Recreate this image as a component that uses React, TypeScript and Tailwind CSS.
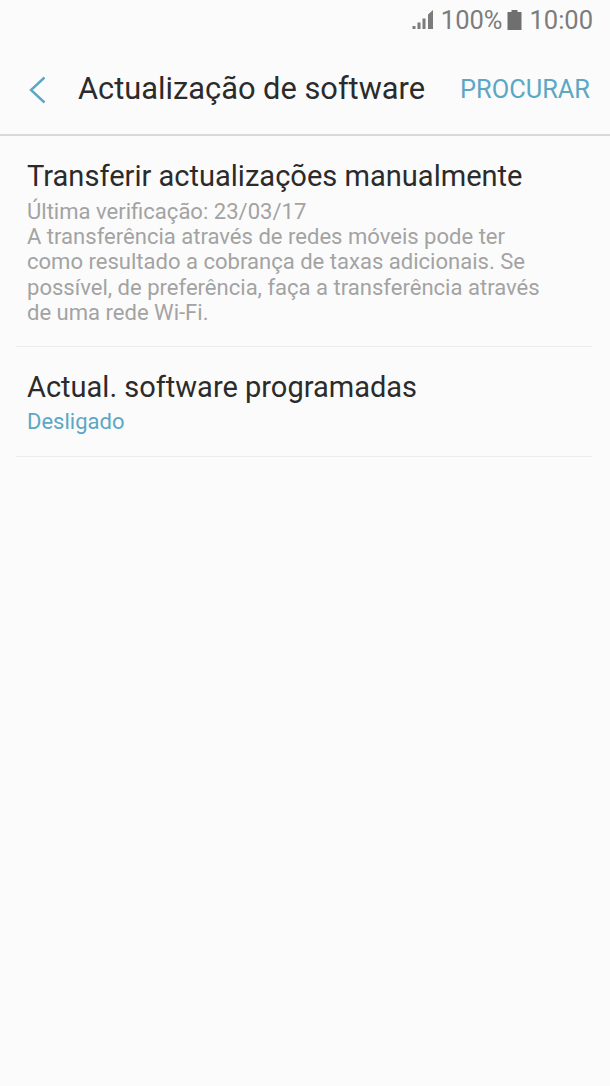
import React from 'react';

function SignalIcon() {
    return (
        <svg width="22" height="22" viewBox="0 0 22 22" fill="#7c7c7c">
            <rect x="0.5" y="17" width="3" height="3" />
            <rect x="5.5" y="13.5" width="3" height="6.5" />
            <rect x="10.5" y="9.5" width="3" height="10.5" />
            <path d="M16 5.5 L21 1 L21 20 L16 20 Z" />
        </svg>
    );
}

function BatteryIcon() {
    return (
        <svg width="15" height="22" viewBox="0 0 15 22" fill="#6f6f6f">
            <path d="M4.5 1 H10.5 V3 H14.5 V21 H0.5 V3 H4.5 Z" />
        </svg>
    );
}

export default function App() {
    return (
        <div className="w-[610px] h-[1086px] bg-[#fbfbfb] flex flex-col font-['Roboto',sans-serif]">
            {/* Status bar */}
            <div className="h-[40px] flex items-center justify-end pr-[17px] text-[25.5px] text-[#7c7c7c]">
                <SignalIcon />
                <span className="ml-[7px] mt-[1px]">100%</span>
                <span className="ml-[5px] flex items-center"><BatteryIcon /></span>
                <span className="ml-[7px] mt-[1px]">10:00</span>
            </div>

            {/* Header */}
            <div className="h-[96px] flex items-center border-b-2 border-[#d9d9d9] pt-[5px]">
                <svg className="ml-[29px]" width="17" height="28" viewBox="0 0 17 28" fill="none" stroke="#5ba7c4" strokeWidth="2.4">
                    <path d="M15.5 1.5 L2 14 L15.5 26.5" />
                </svg>
                <span className="ml-[32px] text-[30.8px] text-[#2b2b2b] flex-1">Actualização de software</span>
                <span className="mr-[20px] text-[25.4px] text-[#5ba7c4]">PROCURAR</span>
            </div>

            {/* Settings list */}
            <div className="mx-[16px] mr-[18px] pt-[22px] pb-[21px] px-[11px] border-b border-[#ececec]">
                <div className="text-[29.05px] leading-[36px] text-[#2b2b2b]">Transferir actualizações manualmente</div>
                <div className="mt-[5px] text-[22.05px] leading-[25.2px] text-[#a3a3a3] w-[530px]">
                    Última verificação: 23/03/17<br />
                    A transferência através de redes móveis pode ter como resultado a cobrança de taxas adicionais. Se possível, de preferência, faça a transferência através de uma rede Wi-Fi.
                </div>
            </div>
            <div className="mx-[16px] mr-[18px] pt-[22px] pb-[20px] px-[11px] border-b border-[#ececec]">
                <div className="text-[29px] leading-[36px] text-[#2b2b2b]">Actual. software programadas</div>
                <div className="mt-[3px] text-[22px] leading-[28px] text-[#5ba7c4]">Desligado</div>
            </div>
        </div>
    );
}
